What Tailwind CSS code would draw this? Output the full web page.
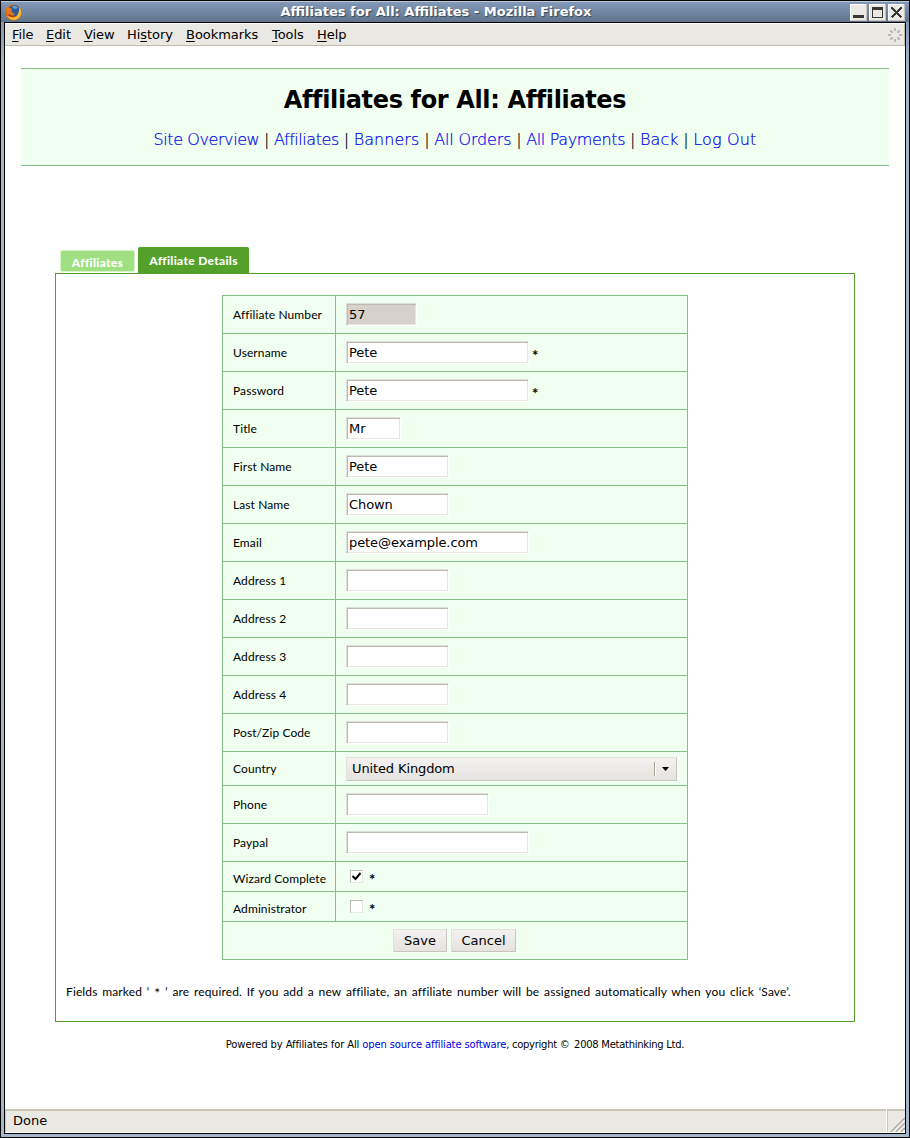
<!DOCTYPE html>
<html lang="en">
<head>
<meta charset="utf-8">
<title>Affiliates for All: Affiliates</title>
<script src="https://cdn.jsdelivr.net/npm/@tailwindcss/browser@4"></script>
</head>
<body class="h-[1138px] w-[910px] overflow-hidden bg-black p-px font-['DejaVu_Sans',sans-serif] text-[13px] text-black">
<div class="flex h-[1136px] w-[908px] flex-col bg-linear-to-b from-[#6d87a3] via-[#a5b5cb] via-[60px] to-[#a4b6cc]">
  <header class="flex h-[21px] shrink-0 items-center border-t border-[#bcc9dc] bg-linear-to-b from-[#8299b9] to-[#5f748c] pl-1 pr-[4px]">
    <svg class="size-[17px]" viewBox="0 0 17 17">
      <circle cx="8.5" cy="8.5" r="8" fill="#d9640f"/>
      <circle cx="9.3" cy="6.8" r="5.6" fill="#285a9c"/>
      <path d="M7 2.2C9 1 12 2 13 4L10 5L8 4Z" fill="#5fa4d8"/>
      <path d="M14 3C17.500 7 17 12.500 12.500 15C8 17.300 3 15 1.500 11C5 14 11 14 13 10C14 8 14.300 5.500 14 3Z" fill="#f7b92c"/>
      <path d="M1 4L3 2.500L4.500 4L7.500 5L6 7L8 9L10 10C8 12.500 5 12 3 11C1 9 .500 6 1 4Z" fill="#e8761c"/>
      <path d="M3 11C5 13.500 9 14 12 12C9 12.500 6 12 5 10Z" fill="#b43b0a"/>
    </svg>
    <h2 class="flex-1 text-center text-[13px] font-bold leading-5 text-white [text-shadow:1px_1px_1px_#34465a]">Affiliates for All: Affiliates - Mozilla Firefox</h2>
    <div class="flex gap-[2px]">
      <svg class="size-[17px]" viewBox="0 0 17 17" shape-rendering="crispEdges"><path d="M0 0H17V17H0Z" fill="#c9c5bd"/><path d="M0 0H16V16H0Z" fill="#fff"/><path d="M1 1H16V16H1Z" fill="#eae9e5"/><path d="M3 11H14V14H3Z" fill="#393933"/></svg>
      <svg class="size-[17px]" viewBox="0 0 17 17" shape-rendering="crispEdges"><path d="M0 0H17V17H0Z" fill="#c9c5bd"/><path d="M0 0H16V16H0Z" fill="#fff"/><path d="M1 1H16V16H1Z" fill="#eae9e5"/><path d="M3 3H14V14H3ZM4 6V13H13V6Z" fill="#393933" fill-rule="evenodd"/></svg>
      <svg class="size-[17px]" viewBox="0 0 17 17" shape-rendering="crispEdges"><path d="M0 0H17V17H0Z" fill="#c9c5bd"/><path d="M0 0H16V16H0Z" fill="#fff"/><path d="M1 1H16V16H1Z" fill="#eae9e5"/><path d="M3.500 3.500L13.500 13.500M13.500 3.500L3.500 13.500" stroke="#393933" stroke-width="2.200"/></svg>
    </div>
  </header>

  <div class="ml-[3px] flex h-[1112px] w-[902px] shrink-0 flex-col border border-black bg-white">
    <nav class="flex h-[23px] shrink-0 items-center border-b border-r border-t border-b-[#bfbbad] border-r-[#bfbbad] border-t-white bg-[#e9e8e3] pl-[7px] pr-[1px]">
      <ul class="flex gap-[14px] leading-5 tracking-[-0.05px] [&_u]:underline-offset-2">
        <li class="w-[20px]"><u>F</u>ile</li>
        <li class="w-[24px]"><u>E</u>dit</li>
        <li class="w-[29px]"><u>V</u>iew</li>
        <li class="w-[45px]">Hi<u>s</u>tory</li>
        <li class="w-[72px]"><u>B</u>ookmarks</li>
        <li class="w-[31px]"><u>T</u>ools</li>
        <li class="w-[30px]"><u>H</u>elp</li>
      </ul>
      <svg class="ml-auto size-[16px]" viewBox="0 0 16 16" fill="#bbbab5" shape-rendering="crispEdges"><path d="M7 1H9V4H7ZM7 12H9V15H7ZM1 7H4V9H1ZM12 7H15V9H12ZM3 3H5V4H6V6H4V5H3ZM11 3H13V5H12V6H10V4H11ZM4 10H6V12H5V13H3V11H4ZM10 10H12V11H13V13H11V12H10Z"/></svg>
    </nav>

    <main class="flex h-[1063px] shrink-0 flex-col items-center pt-[22px]">
      <section class="h-[98px] w-[868px] border-y border-[#85bf85] bg-[#f0fff0] text-center">
        <h1 class="mt-[16px] text-[24px] font-bold leading-[30px] tracking-[-0.36px]">Affiliates for All: Affiliates</h1>
        <p class="mt-[15px] whitespace-nowrap text-[16px] font-extralight leading-[20px] tracking-[-0.25px] [-webkit-text-stroke-width:0.2px] [&_a]:text-[#0000ee]"><a class="tracking-[-0.42px]">Site Overview</a> | <a class="tracking-[-0.45px]">Affiliates</a> | <a class="tracking-[0.05px]">Banners</a> | <a class="tracking-[-0.15px]">All Orders</a> | <a class="tracking-[-0.35px]">All Payments</a> | <a class="tracking-[0px]">Back</a> | <a class="tracking-[0.15px]">Log Out</a></p>
      </section>

      <div class="mt-[81px] flex w-[800px] items-end pl-[5px] font-[Lato,sans-serif] text-[12px] font-black text-white">
        <a class="mb-px mr-[3px] h-[22px] w-[75px] rounded-[2px] border border-[#d5f5c6] bg-[#a1e082] text-center leading-[23px] tracking-[0.3px]">Affiliates</a>
        <a class="h-[26px] w-[111px] rounded-t-[2px] bg-[#53a02b] text-center leading-[27px] tracking-[0.3px]">Affiliate Details</a>
      </div>
      <section class="h-[749px] w-[800px] shrink-0 border border-[#53a02b] pt-[21px]">
        <div class="mx-auto w-[466px] border-l border-t border-[#85bf85] bg-[#f0fff0] font-[Lato,sans-serif] text-[12px]" id="form"></div>
        <p class="ml-[10px] mt-[23px] whitespace-nowrap font-[Lato,sans-serif] text-[12px] leading-[18px] tracking-[0.13px] [word-spacing:1.55px]">Fields marked ‘ <span class="inline-block translate-y-[2px] text-[14px] leading-[10px]">*</span> ’ are required. If you add a new affiliate, an affiliate number will be assigned automatically when you click ‘Save’.</p>
      </section>
      <footer class="mt-[15px] whitespace-nowrap text-[10px] leading-4 tracking-[-0.28px]"><span class="tracking-[-0.12px]">Powered by Affiliates for All </span><a class="tracking-[-0.15px] text-[#0000ee]">open source affiliate software</a>, copyright ©&thinsp; 2008 Metathinking Ltd.</footer>
    </main>

    <footer class="flex h-[24px] shrink-0 border-b border-white bg-[#e9e8e3]">
      <div class="flex-1 border-l border-t-2 border-[#c9c5b7] pl-[7px] leading-5">Done</div>
      <div class="w-px bg-white"></div>
      <div class="flex w-[18px] items-end justify-end border-l border-t-2 border-[#c9c5b7]">
        <svg class="size-[15px]" viewBox="0 0 15 15"><path d="M1 15L15 1M6 15L15 6M11 15L15 11" stroke="#a9a69c" stroke-width="1.600"/><path d="M2.500 15L15 2.500M7.500 15L15 7.500M12.500 15L15 12.500" stroke="#fff"/></svg>
      </div>
    </footer>
  </div>
</div>
<script>
const rows = [
  ['Affiliate Number', 71, '57'], ['Username', 183, 'Pete', 1], ['Password', 183, 'Pete', 1],
  ['Title', 55, 'Mr'], ['First Name', 103, 'Pete'], ['Last Name', 103, 'Chown'],
  ['Email', 183, 'pete@example.com'], ['Address 1', 103, ''], ['Address 2', 103, ''],
  ['Address 3', 103, ''], ['Address 4', 103, ''], ['Post/Zip Code', 103, ''],
  ['Country', 'select'], ['Phone', 143, ''], ['Paypal', 183, ''],
  ['Wizard Complete', 'check', true], ['Administrator', 'check', false]
];
const star = '<span class="block pt-[5px] text-[15px] leading-[18px] font-bold">*</span>';
const html = rows.map(([label, kind, value, req], i) => {
  let height = 'h-[38px]', lead = 'leading-[38px]', field;
  if (kind === 'select') {
    height = 'h-[34px]'; lead = 'leading-[34px]';
    field = `<div class="flex h-[24px] w-[331px] items-center border border-b-[#c9c5bd] border-l-[#e3e1dc] border-r-[#c9c5bd] border-t-[#e3e1dc] bg-linear-to-b from-[#f3f2f1] to-[#e5e3df] pl-[5px] font-['DejaVu_Sans',sans-serif] text-[13px] tracking-[-0.12px]">United Kingdom<span class="ml-auto h-[14px] w-[2px] border-l border-r border-l-[#a8a294] border-r-white"></span><svg class="ml-[6px] mr-[7px] h-[4px] w-[7px]" viewBox="0 0 7 4"><path d="M0 0H7L3.500 4Z"/></svg></div>`;
  } else if (kind === 'check') {
    height = 'h-[30px]'; lead = 'leading-[34px]';
    field = `<span class="mb-[1px] ml-[4px] size-[13px] border border-b-[#e9e5e1] border-l-[#bdb8b0] border-r-[#e9e5e1] border-t-[#bdb8b0] bg-white"><svg class="size-[11px] ${value ? '' : 'hidden'}" viewBox="0 0 11 11"><path d="M1.500 5L4.500 8L9.500 2" fill="none" stroke="#000" stroke-width="2"/></svg></span><span class="ml-[6px]">${star}</span>`;
  } else {
    field = `<div style="width:${kind}px" class="mb-[1px] h-[23px] border border-b-white border-l-[#dedfd8] border-r-white border-t-[#dedfd8] pl-[2px] pt-px font-['DejaVu_Sans',sans-serif] text-[13px] leading-[19px] tracking-[-0.08px] shadow-[inset_1px_1px_#bdb8b0,inset_-1px_-1px_#e9e5e1] ${i ? 'bg-white' : 'bg-[#d6d2ca]'}">${value}</div>${req ? `<span class="ml-[3px]">${star}</span>` : ''}`;
  }
  return `<div class="flex ${height}"><div class="w-[113px] border-b border-r border-[#85bf85] pl-[10px] tracking-[0.1px] ${lead}">${label}</div><div class="flex flex-1 items-center border-b border-r border-[#85bf85] pl-[10px]">${field}</div></div>`;
}).join('');
const button = (text, w) => `<button class="h-[23px] ${w} border border-b-[#c9c5bd] border-l-[#e3e1dc] border-r-[#c9c5bd] border-t-[#e3e1dc] bg-linear-to-b from-[#f3f2f1] to-[#e5e3df] font-['DejaVu_Sans',sans-serif] text-[13px] leading-5">${text}</button>`;
document.getElementById('form').innerHTML = html + `<div class="flex h-[38px] items-center justify-center gap-[4px] border-b border-r border-[#85bf85] pr-[1px]">${button('Save', 'w-[54px]')}${button('Cancel', 'w-[65px]')}</div>`;
</script>
</body>
</html>
